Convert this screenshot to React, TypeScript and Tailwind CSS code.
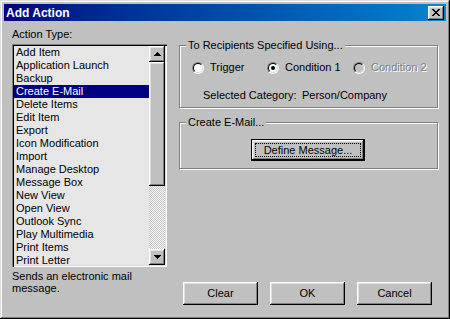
import React from 'react';

const actionTypes = [
  'Add Item',
  'Application Launch',
  'Backup',
  'Create E-Mail',
  'Delete Items',
  'Edit Item',
  'Export',
  'Icon Modification',
  'Import',
  'Manage Desktop',
  'Message Box',
  'New View',
  'Open View',
  'Outlook Sync',
  'Play Multimedia',
  'Print Items',
  'Print Letter',
];

const raised =
  'bg-[#c0c0c0] shadow-[inset_-1px_-1px_0_#000,inset_1px_1px_0_#fff,inset_-2px_-2px_0_#808080,inset_2px_2px_0_#dfdfdf]';

const Arrow = ({ down }: { down?: boolean }) => (
  <svg width="7" height="4" viewBox="0 0 7 4" shapeRendering="crispEdges" className={down ? 'rotate-180' : ''}>
    <rect x="3" y="0" width="1" height="1" fill="#000" />
    <rect x="2" y="1" width="3" height="1" fill="#000" />
    <rect x="1" y="2" width="5" height="1" fill="#000" />
    <rect x="0" y="3" width="7" height="1" fill="#000" />
  </svg>
);

const CloseGlyph = () => {
  const rows = ['11000011', '01100110', '00111100', '00011000', '00111100', '01100110', '11000011'];
  return (
    <svg width="8" height="7" viewBox="0 0 8 7" shapeRendering="crispEdges">
      {rows.map((r, y) =>
        r.split('').map((c, x) => (c === '1' ? <rect key={`${x}-${y}`} x={x} y={y} width="1" height="1" fill="#000" /> : null))
      )}
    </svg>
  );
};

type RadioProps = { label: string; checked?: boolean; disabled?: boolean; width?: string };

const Radio: React.FC<RadioProps> = (props) => {
  return (
    <div className={`flex items-center ${props.width ?? ''}`}>
      <div className="w-[12px] h-[12px] rounded-full border border-t-[#808080] border-l-[#808080] border-r-white border-b-white">
        <div
          className={`w-full h-full rounded-full border border-t-black border-l-black border-r-[#dfdfdf] border-b-[#dfdfdf] flex items-center justify-center ${
            props.disabled ? 'bg-[#c0c0c0]' : 'bg-white'
          }`}
        >
          {props.checked && <div className="w-[4px] h-[4px] rounded-full bg-black" />}
        </div>
      </div>
      <span
        className={`ml-[6px] ${props.disabled ? 'text-[#808080] [text-shadow:1px_1px_0_#fff]' : 'text-black'}`}
      >
        {props.label}
      </span>
    </div>
  );
};

const GroupBox = ({ title, className, children }: { title: string; className: string; children: React.ReactNode }) => (
  <div className={`relative border border-[#808080] shadow-[1px_1px_0_#fff,inset_1px_1px_0_#fff] ${className}`}>
    <span className="absolute -top-[7px] left-[6px] px-[2px] bg-[#c0c0c0] leading-[13px]">{title}</span>
    {children}
  </div>
);

const Button = ({ label }: { label: string }) => (
  <button className={`w-[75px] h-[23px] flex items-center justify-center leading-none ${raised}`}>{label}</button>
);

export default function App() {
  return (
    <div className="w-[450px] h-[319px] bg-[#c0c0c0] p-[4px] flex flex-col font-['Liberation_Sans',Arial,sans-serif] text-[11px] text-black shadow-[inset_-1px_-1px_0_#000,inset_1px_1px_0_#dfdfdf,inset_-2px_-2px_0_#808080,inset_2px_2px_0_#fff]">
      {/* title bar */}
      <div className="h-[17px] shrink-0 flex items-center justify-between bg-gradient-to-r from-[#000080] to-[#1084d0] pl-[2px] pr-[2px]">
        <span className="text-white font-bold text-[12px] leading-none">Add Action</span>
        <button className={`w-[16px] h-[14px] flex items-center justify-center ${raised}`}>
          <CloseGlyph />
        </button>
      </div>

      <div className="flex flex-row pl-[8px]">
        {/* left column */}
        <div className="w-[155px] flex flex-col">
          <div className="mt-[7px] leading-[13px]">Action Type:</div>
          <div className="mt-[3px] h-[223px] p-[2px] flex bg-[#e6e6e6] shadow-[inset_1px_1px_0_#808080,inset_2px_2px_0_#000,inset_-1px_-1px_0_#fff,inset_-2px_-2px_0_#dfdfdf]">
            <div className="flex-1 overflow-hidden">
              {actionTypes.map((item) => (
                <div
                  key={item}
                  className={`h-[13px] leading-[13px] pl-[2px] whitespace-nowrap ${
                    item === 'Create E-Mail' ? 'bg-[#000080] text-white' : ''
                  }`}
                >
                  {item}
                </div>
              ))}
            </div>
            <div className="w-[16px] flex flex-col">
              <div className={`h-[16px] shrink-0 flex items-center justify-center ${raised}`}>
                <Arrow />
              </div>
              <div className={`h-[124px] shrink-0 ${raised}`} />
              <div className="flex-1 bg-[repeating-conic-gradient(#c0c0c0_0%_25%,#ffffff_0%_50%)] bg-[length:2px_2px]" />
              <div className={`h-[16px] shrink-0 flex items-center justify-center ${raised}`}>
                <Arrow down />
              </div>
            </div>
          </div>
          <p className="mt-[3px] leading-[12px]">Sends an electronic mail message.</p>
        </div>

        {/* right column */}
        <div className="ml-[12px] w-[259px] flex flex-col">
          <GroupBox title="To Recipients Specified Using..." className="mt-[24px] h-[63px]">
            <div className="mt-[15px] h-[13px] pl-[12px] flex items-center">
              <Radio label="Trigger" width="w-[75px]" />
              <Radio label="Condition 1" checked width="w-[86px]" />
              <Radio label="Condition 2" disabled />
            </div>
            <div className="mt-[15px] h-[13px] pl-[23px] flex items-center">
              <span className="w-[99px]">Selected Category:</span>
              <span>Person/Company</span>
            </div>
          </GroupBox>

          <GroupBox title="Create E-Mail..." className="mt-[14px] h-[47px]">
            <div className="mt-[16px] ml-[71px] w-[114px] h-[22px] border border-black">
              <div className={`w-full h-full p-[3px] flex ${raised}`}>
                <div className="flex-1 border border-dotted border-black flex items-center justify-center leading-none">
                  Define Message...
                </div>
              </div>
            </div>
          </GroupBox>

          <div className="mt-[113px] ml-[4px] flex gap-[12px]">
            <Button label="Clear" />
            <Button label="OK" />
            <Button label="Cancel" />
          </div>
        </div>
      </div>
    </div>
  );
}
